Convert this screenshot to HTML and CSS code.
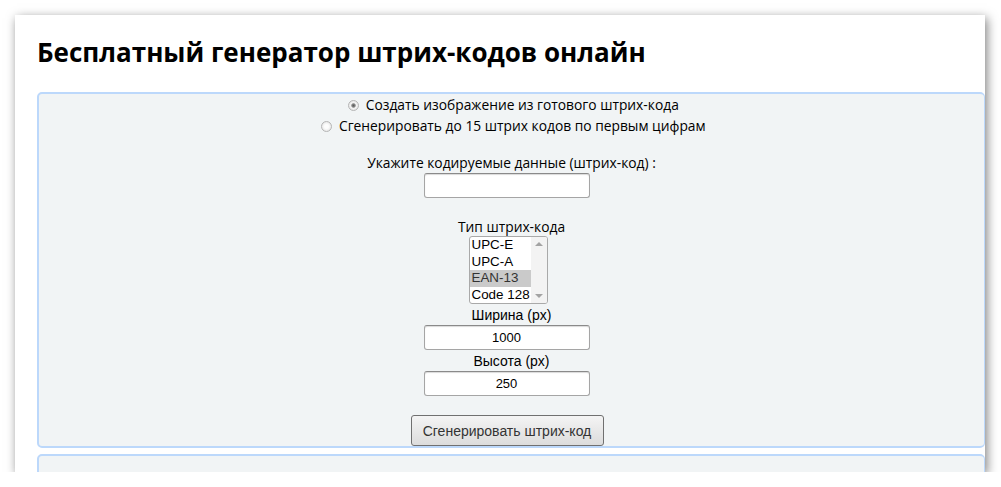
FILE: index.html
```html
<!DOCTYPE html>
<html lang="ru">
<head>
    <meta charset="UTF-8">
    <meta name="viewport" content="width=device-width, initial-scale=1.0">
    <title>Бесплатный генератор штрих-кодов онлайн</title>
    <link rel="stylesheet" href="styles.css">
</head>
<body>
    <div class="window">
        <h1>Бесплатный генератор штрих-кодов онлайн</h1>

        <form class="panel" id="barcodeForm">
            <div class="mode">
                <label><input type="radio" name="mode" value="image" checked> Создать изображение из готового штрих-кода</label>
            </div>
            <div class="mode">
                <label><input type="radio" name="mode" value="generate"> Сгенерировать до 15 штрих кодов по первым цифрам</label>
            </div>

            <label class="caption data-caption" for="code">Укажите кодируемые данные (штрих-код) :</label>
            <input type="text" id="code" name="code" class="field">

            <div class="caption type-caption">Тип штрих-кода</div>
            <div class="listbox" id="type">
                <ul class="options">
                    <li>UPC-E</li>
                    <li>UPC-A</li>
                    <li class="selected">EAN-13</li>
                    <li>Code 128</li>
                </ul>
                <div class="scrollbar">
                    <span class="arrow up"></span>
                    <span class="arrow down"></span>
                </div>
            </div>

            <label class="caption small" for="width">Ширина (px)</label>
            <input type="text" id="width" name="width" class="field num" value="1000">

            <label class="caption small height-caption" for="height">Высота (px)</label>
            <input type="text" id="height" name="height" class="field num" value="250">

            <button type="button" class="generate">Сгенерировать штрих-код</button>
        </form>

        <div class="panel result"></div>
    </div>
</body>
</html>
```

FILE: styles.css
```css
body {
    margin: 0;
    background: #fff;
    font-family: "Open Sans", "Noto Sans", sans-serif;
    color: #000;
}
.window {
    margin: 15px 0 0 15px;
    width: 970px;
    height: 457px;
    background: #fff;
    box-shadow: 2px 3px 10px rgba(0, 0, 0, 0.5);
    overflow: hidden;
}
h1 {
    margin: 0;
    padding: 18px 0 0 22px;
    height: 60px;
    box-sizing: border-box;
    font-size: 26px;
    font-weight: 700;
    line-height: 38px;
}
.panel {
    margin: 17px 0 0 22px;
    width: 948px;
    box-sizing: border-box;
    background: #f1f4f5;
    border: 2px solid #bcd8fb;
    border-right-width: 1px;
    border-radius: 5px;
    text-align: center;
}
.mode {
    font-size: 13.8px;
    line-height: 21px;
    padding-left: 4px;
}
.mode input {
    appearance: none;
    width: 11px;
    height: 11px;
    margin: 0 3px 0 0;
    border: 1px solid #b5b5b5;
    border-radius: 50%;
    background: radial-gradient(circle, #fdfdfd 30%, #dcdcdc 100%);
    vertical-align: -1px;
}
.mode input:checked {
    background: radial-gradient(circle, #5a5a5a 0, #8a8a8a 28%, #f4f4f4 42%, #dcdcdc 100%);
}
.caption {
    display: block;
    font-size: 13.8px;
    line-height: 21px;
}
.data-caption {
    margin-top: 16px;
}
.type-caption {
    margin-top: 20px;
    line-height: 18px;
}
.small {
    font-family: "Liberation Sans", Arial, sans-serif;
    font-size: 14px;
    line-height: 19px;
}
.height-caption {
    margin-top: 2px;
}
.field {
    display: block;
    margin: 0 0 0 calc(50% - 88px);
    width: 166px;
    height: 25px;
    box-sizing: border-box;
    border: 1px solid #a5a5a5;
    border-top-color: #8a8a8a;
    border-radius: 3px;
    box-shadow: inset 0 1px 1px rgba(0, 0, 0, 0.15);
    background: #fff;
    font-family: "Liberation Sans", Arial, sans-serif;
    font-size: 13px;
}
.num {
    text-align: center;
}
.listbox {
    display: flex;
    margin: 0 0 2px calc(50% - 43px);
    width: 79px;
    height: 68px;
    box-sizing: border-box;
    border: 1px solid #a9a9a9;
    border-radius: 3px;
    background: #fff;
    overflow: hidden;
    text-align: left;
}
.options {
    flex: 1;
    min-width: 0;
    margin: 0;
    padding: 0;
    list-style: none;
    font-family: "Liberation Sans", Arial, sans-serif;
    font-size: 13.4px;
    line-height: 16.5px;
}
.options li {
    padding: 0 0 0 2px;
    white-space: nowrap;
}
.options .selected {
    background: #cacaca;
    color: #333;
}
.scrollbar {
    display: flex;
    flex-direction: column;
    justify-content: space-between;
    flex: 0 0 16px;
    background: #f3f3f3;
}
.arrow {
    display: block;
    height: 14px;
    position: relative;
}
.arrow::after {
    content: "";
    position: absolute;
    left: 4px;
    border-left: 4px solid transparent;
    border-right: 4px solid transparent;
}
.up::after {
    top: 5px;
    border-bottom: 4px solid #a3a3a3;
}
.down::after {
    top: 5px;
    border-top: 4px solid #a3a3a3;
}
.generate {
    display: block;
    margin: 19px 0 0 calc(50% - 101px);
    width: 193px;
    height: 31px;
    border: 1px solid #707070;
    border-radius: 3px;
    background: linear-gradient(#f4f4f4, #e8e8e8 50%, #dcdcdc);
    font-family: "Liberation Sans", Arial, sans-serif;
    font-size: 14px;
    color: #333;
}
.result {
    margin-top: 6px;
    height: 40px;
}
```
